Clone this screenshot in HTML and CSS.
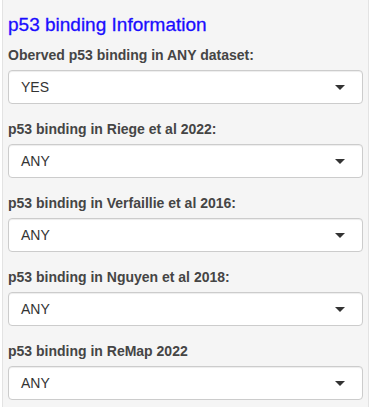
FILE: index.html
```html
<!DOCTYPE html>
<html>
<head>
<meta charset="utf-8">
<link rel="stylesheet" href="styles.css">
</head>
<body>
<div class="panel">
  <h4 class="title">p53 binding Information</h4>
  <div class="group">
    <label class="lbl">Oberved p53 binding in ANY dataset:</label>
    <div class="sel"><span class="val">YES</span><span class="caret"></span></div>
  </div>
  <div class="group">
    <label class="lbl">p53 binding in Riege et al 2022:</label>
    <div class="sel"><span class="val">ANY</span><span class="caret"></span></div>
  </div>
  <div class="group">
    <label class="lbl">p53 binding in Verfaillie et al 2016:</label>
    <div class="sel"><span class="val">ANY</span><span class="caret"></span></div>
  </div>
  <div class="group">
    <label class="lbl">p53 binding in Nguyen et al 2018:</label>
    <div class="sel"><span class="val">ANY</span><span class="caret"></span></div>
  </div>
  <div class="group">
    <label class="lbl">p53 binding in ReMap 2022</label>
    <div class="sel"><span class="val">ANY</span><span class="caret"></span></div>
  </div>
</div>
</body>
</html>
```
FILE: styles.css
```css
html, body {
  margin: 0;
  padding: 0;
  background: #ffffff;
  font-family: "Liberation Sans", Arial, sans-serif;
  color: #333333;
}
.panel {
  margin-left: 2px;
  width: 367px;
  box-sizing: border-box;
  background: #f5f5f5;
  border-left: 1px solid #e3e3e3;
  border-right: 1px solid #e3e3e3;
  padding: 5px 5px 20px 5px;
}
.title {
  margin: 10px 0 10px 0;
  font-size: 19px;
  line-height: 20px;
  font-weight: normal;
  -webkit-text-stroke: 0.3px #1a0dff;
  color: #1a0dff;
}
.group {
  margin-bottom: 15px;
}
.lbl {
  display: block;
  font-size: 14px;
  line-height: 20px;
  font-weight: bold;
  margin-bottom: 5px;
  color: #454545;
}
.sel {
  display: flex;
  align-items: center;
  justify-content: space-between;
  height: 34px;
  box-sizing: border-box;
  border: 1px solid #cccccc;
  border-radius: 4px;
  background: #ffffff;
  padding: 6px 17px 6px 12px;
  box-shadow: inset 0 1px 1px rgba(0,0,0,0.075);
  font-size: 14px;
  line-height: 20px;
  color: #333333;
}
.caret {
  width: 0;
  height: 0;
  border-style: solid;
  border-width: 5px 5px 0 5px;
  border-color: #333333 transparent transparent transparent;
}
```
